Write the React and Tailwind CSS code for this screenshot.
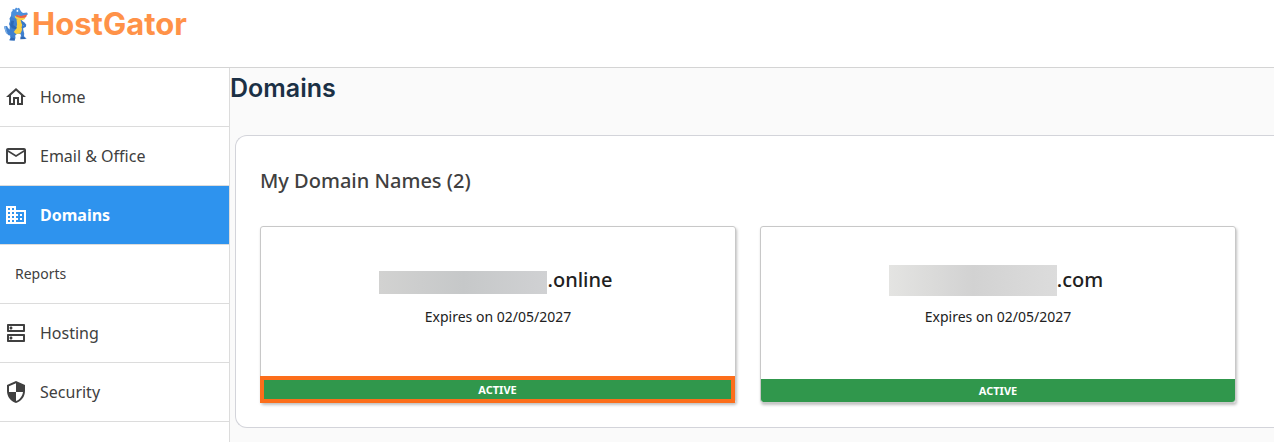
import { MdDomain, MdMailOutline, MdOutlineDns, MdOutlineHome, MdSecurity } from "react-icons/md"

const navItems = [
    { label: "Home", icon: MdOutlineHome },
    { label: "Email & Office", icon: MdMailOutline },
    { label: "Domains", icon: MdDomain, active: true },
    { label: "Reports", sub: true },
    { label: "Hosting", icon: MdOutlineDns },
    { label: "Security", icon: MdSecurity },
]

const domains = [
    { tld: ".online", expires: "02/05/2027", mask: "h-[23px] mt-1 from-[#d2d2d1] via-[#c6c8c9] to-[#d0d1d3]", highlight: true },
    { tld: ".com", expires: "02/05/2027", mask: "h-[31px] from-[#e4e4e2] via-[#d2d2d2] to-[#dcdcdc]" },
]

const GatorLogo = () => (
    <svg width="26" height="34" viewBox="0 0 26 34" aria-hidden="true">
        {/* Tail */}
        <path d="M1 19.5l3-.6 1 2 1.6 1.6 2.4.5 0 5-3 .5-3-2.5-1.2-3.5z" fill="#3f80cf" />
        <path d="M1 19.5l2 .5.6 4L5 27l-2-1.5z" fill="#82b4e8" />
        {/* Back, body and legs */}
        <path d="M8.5 8l-2 3.5L7 14l-1 3 .8 2-.3 4 1.5 3-1 3 .6 2-1.6 2.3 5.5.2 1-2.5-.3-2.5 2.3-2 3 .5.8 2.5-.3 2.6 5.7-.3-2.7-2.6.2-2.7-1-4 0-6-2-5-4-4z" fill="#3f80cf" />
        {/* Head with ridge */}
        <path d="M8 9l.3-4 1.2-1 .2-2 2 .5L13 .5l1.4 1 1.6-.8 1 1.7 1.1 2.1 1.9 1.5 4-.5 1 1.7-2 1.3-5 .8-5-1.1-1.5 3.6z" fill="#4b8fdc" />
        <path d="M13.6 2.8h1.6v2h-1.6z" fill="#ffffff" />
        {/* Mouth and lower jaw */}
        <path d="M13 7.8l5 1.3 6-1.6-.8 2.4-2.2 1.3-4.5.2-3-1.4z" fill="#ec6246" />
        <path d="M11.6 8.5l2.4 1.6 3.5 1 5-.4-1 1.5-2.3 1.1-4-.4-3-1.9z" fill="#f8cf45" />
        {/* Belly */}
        <path d="M13.5 12l4.2 1.2 1.4 4-.2 6-1.4 3.2-4.5.6-2.2-2 2.4-3.5.9-4z" fill="#f8cf45" />
        {/* Arms */}
        <path d="M8.5 13.5l2.5.5-.7 4 3.5 2.4-.8 1.8-4-.9-2-3z" fill="#2e68b6" />
        <path d="M18.5 13.5l3 2 1.8 2.3-.5 2.2-3.5 1.5-1-1.4 2.3-1.7-2-2z" fill="#3979c9" />
        {/* Feet */}
        <path d="M7.8 30.3l3.8 1 .3 2.2-4.9-.2zM17.5 29.5l3 .2 2.3 2.3-5.5.2z" fill="#2e68b6" />
    </svg>
)

const NavItem = ({ item }) => {
    const Icon = item.icon

    return (
        <li className="border-b border-[#dcdcdc]">
            <a
                href="#"
                aria-current={item.active ? "page" : undefined}
                className={`flex h-[58px] items-center gap-3 ${item.sub ? "pl-[15px] text-sm" : "pl-1 text-base"} ${item.active ? "bg-[#2e93ee] font-bold text-white" : "text-[#404040]"}`}
            >
                {Icon && <Icon size={24} />}
                {item.label}
            </a>
        </li>
    )
}

const DomainCard = ({ domain }) => (
    <article className="flex flex-col rounded-[3px] border border-[#c8c8c8] text-center text-[#212121] shadow-[1px_2px_3px_rgba(0,0,0,0.25)]">
        <div className="flex h-[149px] flex-col items-center pt-[35px]">
            <h3 className="flex h-9 items-center justify-center pr-1 text-xl font-medium">
                <span className={`w-[168px] bg-linear-to-r ${domain.mask}`} />
                {domain.tld}
            </h3>
            <p className="mt-[9px] text-sm">Expires on {domain.expires}</p>
        </div>
        {domain.highlight ? (
            <div className="-mb-px -ml-px border-4 border-[#fc6e1b] bg-[#30974c] text-[11px] leading-[19px] font-bold text-white">ACTIVE</div>
        ) : (
            <div className="mt-[3px] rounded-b-[3px] bg-[#30974c] text-[11px] leading-[23px] font-bold text-white">ACTIVE</div>
        )}
    </article>
)

const App = () => {
    return (
        <div className="flex min-h-screen flex-col bg-white font-['Noto_Sans',sans-serif]">

            {/* Header */}
            <header className="flex h-[68px] items-start border-b border-[#d4d4d4] pt-[7px] pl-[3px]">
                <a href="#" className="flex items-start gap-[3px]">
                    <GatorLogo />
                    <span className="font-[Inter,sans-serif] text-[31px] leading-[34px] font-bold text-[#ff9248]">HostGator</span>
                </a>
            </header>

            <div className="flex grow">
                {/* Sidebar */}
                <nav className="w-[230px] shrink-0 border-r border-[#dcdcdc]">
                    <ul>
                        {navItems.map((item) => <NavItem key={item.label} item={item} />)}
                    </ul>
                </nav>

                {/* Content */}
                <main className="min-w-0 grow bg-[#fafafa]">
                    <h1 className="font-[Inter,sans-serif] text-[25px] leading-10 font-semibold text-[#1b3045]">Domains</h1>

                    <section className="mt-[27px] ml-[5px] rounded-l-xl border border-r-0 border-[#d3d4da] bg-white pt-8 pr-[38px] pb-6 pl-6">
                        <h2 className="text-xl leading-[26px] font-medium text-[#404040]">My Domain Names (2)</h2>
                        <div className="mt-8 grid grid-cols-2 gap-6">
                            {domains.map((domain) => <DomainCard key={domain.tld} domain={domain} />)}
                        </div>
                    </section>
                </main>
            </div>
        </div>
    )
}

export default App
